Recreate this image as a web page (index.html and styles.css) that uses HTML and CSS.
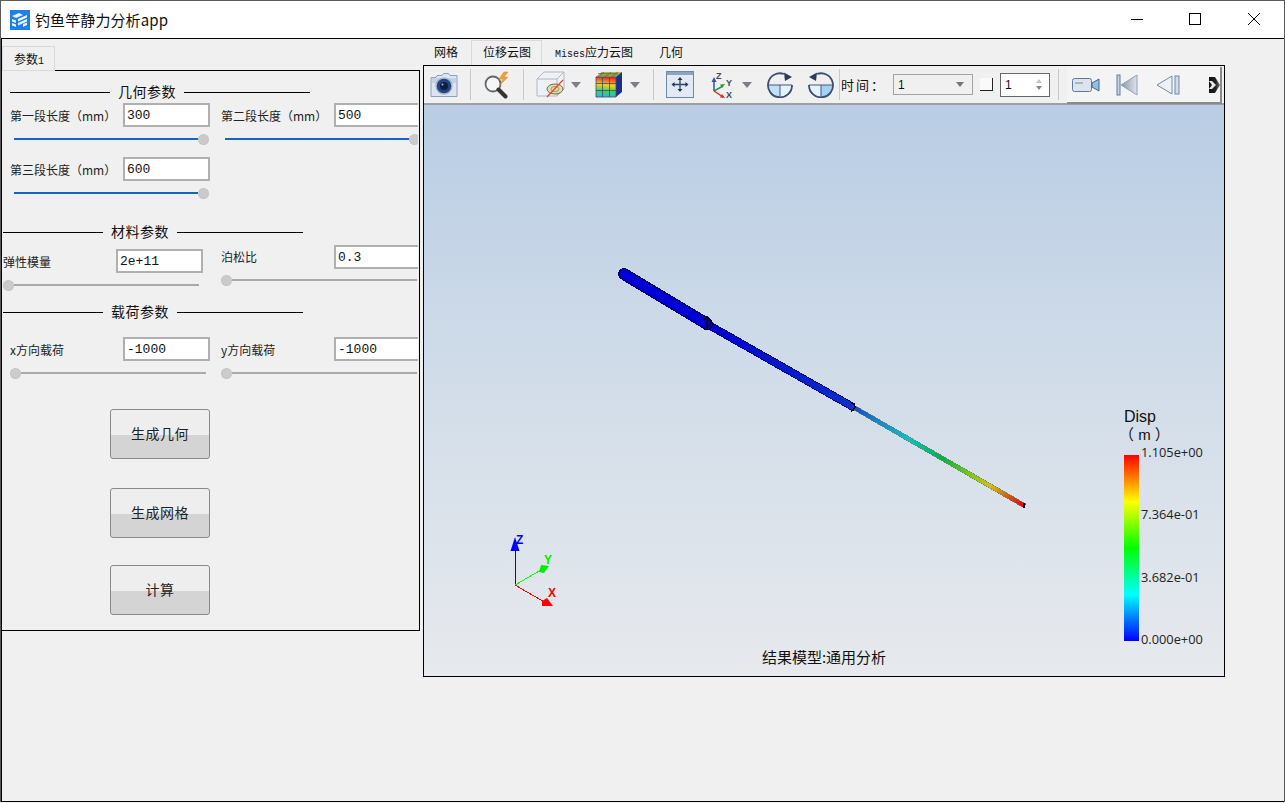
FILE: index.html
```html
<!DOCTYPE html>
<html lang="zh">
<head>
<meta charset="utf-8">
<title>钓鱼竿静力分析app</title>
<link rel="stylesheet" href="styles.css">
</head>
<body>
<div class="window">
  <header class="titlebar">
    <svg class="logo" width="20" height="20" viewBox="0 0 20 20"><rect width="20" height="20" fill="#1d80e8"/><path d="M2 6 9 3l4 2-7 3zM2 9l4 1.500V13L2 11.500zM2 13l4 1.500V17L2 15.500zM8 9l9-4v2.500L8 11.500zM8 13l9-4v2.500L8 15.500zM13 14l4-1.500V15l-4 2z" fill="#e8f3ff"/></svg>
    <span class="apptitle">钓鱼竿静力分析app</span>
    <div class="winctl">
      <svg width="14" height="14" viewBox="0 0 14 14"><path d="M0 6.500h12" stroke="#000" fill="none"/></svg>
      <svg width="14" height="14" viewBox="0 0 14 14"><rect x=".5" y=".5" width="11" height="11" stroke="#000" fill="none"/></svg>
      <svg width="14" height="14" viewBox="0 0 14 14"><path d="M1 0l12 12M13 0 1 12" stroke="#000" fill="none"/></svg>
    </div>
  </header>
  <main class="body">
    <section class="left">
      <div class="ltabs"><span class="ltab">参数<b class="mono">1</b></span></div>
      <div class="panel">
        <div class="clip">
          <div class="sec sec-a"><i></i><span>几何参数</span><i class="long"></i></div>
          <div class="row r1">
            <div class="col">
              <div class="field"><label>第一段长度（mm）</label><input value="300" readonly></div>
              <div class="slider full"><i class="fill"></i><i class="thumb"></i></div>
            </div>
            <div class="col">
              <div class="field"><label>第二段长度（mm）</label><input value="500" readonly></div>
              <div class="slider full"><i class="fill"></i><i class="thumb"></i></div>
            </div>
          </div>
          <div class="row r2">
            <div class="col">
              <div class="field"><label>第三段长度（mm）</label><input value="600" readonly></div>
              <div class="slider full"><i class="fill"></i><i class="thumb"></i></div>
            </div>
          </div>
          <div class="sec sec-b"><i></i><span>材料参数</span><i class="long"></i></div>
          <div class="row r3">
            <div class="col shifted">
              <div class="field"><label>弹性模量</label><input value="2e+11" readonly></div>
              <div class="slider"><i class="thumb"></i><i class="rest"></i></div>
            </div>
            <div class="col raised">
              <div class="field up"><label>泊松比</label><input value="0.3" readonly></div>
              <div class="slider"><i class="thumb"></i><i class="rest"></i></div>
            </div>
          </div>
          <div class="sec sec-c"><i></i><span>载荷参数</span><i class="long"></i></div>
          <div class="row r4">
            <div class="col">
              <div class="field"><label>x方向载荷</label><input value="-1000" readonly></div>
              <div class="slider"><i class="thumb"></i><i class="rest"></i></div>
            </div>
            <div class="col">
              <div class="field"><label>y方向载荷</label><input value="-1000" readonly></div>
              <div class="slider"><i class="thumb"></i><i class="rest"></i></div>
            </div>
          </div>
          <div class="btns">
            <button class="btn b1">生成几何</button>
            <button class="btn b2">生成网格</button>
            <button class="btn b3">计算</button>
          </div>
        </div>
      </div>
    </section>
    <section class="right">
      <nav class="rtabs">
        <span class="rtab t1">网格</span>
        <span class="rtab t2">位移云图</span>
        <span class="rtab t3"><b class="mono">Mises</b>应力云图</span>
        <span class="rtab t4">几何</span>
      </nav>
      <div class="viewer">
        <div class="toolbar">
          <svg class="m6" width="28" height="24" viewBox="0 0 28 24"><path d="M1 4.500h5l1-2h5l1.500-2h5l1.500 2h7v21H1z" fill="#dde5f0" stroke="#8aa0bd"/><path d="M2 5h24v5H2z" fill="#c3d2e6"/><circle cx="14" cy="13" r="8" fill="#25457c" stroke="#a5b8d2" stroke-width="1.500"/><circle cx="14" cy="13" r="4" fill="#0c1f44"/><circle cx="12.500" cy="11.500" r="1" fill="#9fc0ee"/></svg>
          <i class="sep m12"></i>
          <svg class="m12" width="29" height="28" viewBox="0 0 29 28"><circle cx="10" cy="13" r="7.500" fill="#f4f6f9" stroke="#666" stroke-width="1.800"/><path d="M15.500 18.500l7 7" stroke="#333" stroke-width="4" stroke-linecap="round"/><path d="M21 1l-5 7h4l-3 6 8-8h-4l4-5z" fill="#f0a030" stroke="#c98a30" stroke-width=".5"/></svg>
          <i class="sep m11"></i>
          <svg class="m12" width="29" height="27" viewBox="0 0 29 27"><path d="M1 8l7-7h20v17l-7 7H1z" fill="#eef1f5" stroke="#b0b8c4"/><path d="M1 8h20v17M21 8l7-7" fill="none" stroke="#b0b8c4"/><ellipse cx="19" cy="18" rx="8" ry="5" fill="#e6d9a8" stroke="#6b6a50"/><ellipse cx="19" cy="18" rx="4" ry="2.500" fill="none" stroke="#a89a68"/><path d="M11 26 27 9" stroke="#d84a30" stroke-width="1.200"/></svg>
          <svg class="m6 tri" width="10" height="6" viewBox="0 0 10 6"><path d="M0 0h10L5 6z" fill="#7b7f86"/></svg>
          <svg class="m14" width="28" height="27" viewBox="0 0 28 27"><defs><linearGradient id="gridg" x1="0.100" y1="0" x2="0" y2="1"><stop offset="0" stop-color="#f03020"/><stop offset=".35" stop-color="#f5d020"/><stop offset=".65" stop-color="#40d060"/><stop offset="1" stop-color="#30b0f0"/></linearGradient></defs><path d="M1 6l6-5h20v20l-6 5H1z" fill="#1c2f8c"/><path d="M1 6l6-5h20l-6 5z" fill="#b8b84a"/><path d="M3 6l6-5M10 6l6-5M16.500 6l6-5M5 4h20M3 2.500h20" stroke="#4a5a50" stroke-width=".6"/><rect x="1" y="6" width="20" height="20" fill="url(#gridg)"/><path d="M7.500 6v20M14.500 6v20M1 12.500h20M1 19.500h20" stroke="#3a4a70" stroke-width=".8"/><path d="M1 6h20v20H1z" fill="none" stroke="#3a4a70" stroke-width=".8"/></svg>
          <svg class="m7 tri" width="10" height="6" viewBox="0 0 10 6"><path d="M0 0h10L5 6z" fill="#7b7f86"/></svg>
          <i class="sep m13"></i>
          <svg class="m12" width="28" height="27" viewBox="0 0 28 27"><rect x=".5" y=".5" width="27" height="26" fill="#e3e9f2" stroke="#7187a8"/><path d="M1 1h26v3H1z" fill="#8ea3c1"/><path d="M14 8v11M8 13.500h12" stroke="#2e4468" stroke-width="1.300"/><path d="M14 6l-2.500 3h5zM14 21l-2.500-3h5zM5.500 13.500l3-2.500v5zM22.500 13.500l-3-2.500v5z" fill="#1f3558"/></svg>
          <svg class="m17" width="24" height="28" viewBox="0 0 24 28"><path d="M3 20V9" stroke="#2b55b5" stroke-width="1.500"/><path d="M3 6 .5 11h5z" fill="#2b55b5"/><path d="M3 20l9-5" stroke="#2d9a3a" stroke-width="1.500"/><path d="M14 13l-5 .5 2 3.500z" fill="#2d9a3a"/><path d="M3 20l9 6" stroke="#d8302a" stroke-width="1.500"/><path d="M14 27l-5-.5 2-3.500z" fill="#d8302a"/><text x="5" y="8" class="axl">Z</text><text x="15" y="15" class="axl">Y</text><text x="15" y="27" class="axl">X</text></svg>
          <svg class="m7 tri" width="10" height="6" viewBox="0 0 10 6"><path d="M0 0h10L5 6z" fill="#7b7f86"/></svg>
          <svg class="m15" width="26" height="26" viewBox="0 0 26 26"><path d="M13 13H1a12 12 0 0 0 12 12z" fill="#bfe0f6"/><path d="M13 13h12a12 12 0 0 1-12 12z" fill="#e6f2fb"/><path d="M1 13h24M13 13v12" stroke="#45597a"/><path d="M17 2A12 12 0 1 0 25 13" fill="none" stroke="#3b4f72" stroke-width="1.800"/><path d="M17 .5l8 4.500-7 4z" fill="#2a3c5c"/></svg>
          <svg class="m15" width="26" height="26" viewBox="0 0 26 26"><path d="M13 13h12a12 12 0 0 1-12 12z" fill="#a5d2f2"/><path d="M13 13H1a12 12 0 0 0 12 12z" fill="#e6f2fb"/><path d="M1 13h24M13 13v12" stroke="#45597a"/><path d="M9 2A12 12 0 1 1 1 13" fill="none" stroke="#3b4f72" stroke-width="1.800"/><path d="M9 .5 1 5l7 4z" fill="#2a3c5c"/></svg>
          <i class="sep m5"></i>
          <span class="tlabel">时间：</span>
          <div class="combo"><span>1</span><svg width="8" height="5" viewBox="0 0 8 5"><path d="M0 0h8L4 5z" fill="#777"/></svg></div>
          <i class="check"></i>
          <div class="spin"><span>1</span><svg width="6" height="11" viewBox="0 0 6 11"><path d="M3 0l3 4H0z" fill="#c4c4c4"/><path d="M3 11l3-4H0z" fill="#888"/></svg></div>
          <i class="sep m8"></i>
          <div class="subbar">
            <svg class="m5" width="28" height="16" viewBox="0 0 28 16"><rect x=".5" y="1.500" width="19" height="13" rx="2" fill="#dde3ec" stroke="#5e7aa0"/><rect x="3" y="5" width="8" height="2" fill="#aab4c2"/><path d="M20 6l7-4v12l-7-4z" fill="#8fc0e4" stroke="#44648e"/></svg>
            <svg class="m16" width="22" height="22" viewBox="0 0 22 22"><defs><linearGradient id="pg" x1="0" y1="0" x2="1" y2="0"><stop offset="0" stop-color="#8698ae"/><stop offset="1" stop-color="#dfe4ea"/></linearGradient></defs><path d="M21 1v20L5 11z" fill="url(#pg)" stroke="#8fa0b5"/><rect x="1" y="1" width="3" height="20" fill="#c9d3df" stroke="#5f7da3"/></svg>
            <svg class="m18" width="24" height="20" viewBox="0 0 24 20"><path d="M16 1v18L1 10z" fill="#eef1f5" stroke="#6e89ab"/><rect x="19" y="1" width="4" height="18" fill="#d4dbe4" stroke="#6e89ab"/></svg>
            <svg class="m29" width="13" height="18" viewBox="0 0 13 18"><defs><linearGradient id="endg" x1="0" y1="0" x2="1" y2="0"><stop offset="0" stop-color="#111"/><stop offset=".6" stop-color="#222"/><stop offset="1" stop-color="#777"/></linearGradient></defs><path d="M0 1h6l5 8-5 8H0z" fill="url(#endg)"/><path d="M0 5h3l4 4-4 4H0l3-4z" fill="#e8e8e8"/></svg>
          </div>
        </div>
        <div class="canvas">
          <svg class="scene" width="800" height="571" viewBox="424 105 800 571">
            <defs>
              <linearGradient id="rodg" gradientUnits="userSpaceOnUse" x1="853" y1="407" x2="1025" y2="506">
                <stop offset="0" stop-color="#1248c0"/>
                <stop offset=".13" stop-color="#1a80c4"/>
                <stop offset=".32" stop-color="#10c0c0"/>
                <stop offset=".52" stop-color="#08b040"/>
                <stop offset=".67" stop-color="#70cc10"/>
                <stop offset=".8" stop-color="#d0c010"/>
                <stop offset=".9" stop-color="#d06010"/>
                <stop offset="1" stop-color="#e00000"/>
              </linearGradient>
              <linearGradient id="midg" gradientUnits="userSpaceOnUse" x1="707" y1="324" x2="853" y2="407">
                <stop offset="0" stop-color="#0000d0"/>
                <stop offset="1" stop-color="#0c30c8"/>
              </linearGradient>
              <linearGradient id="legend" x1="0" y1="1" x2="0" y2="0">
                <stop offset="0" stop-color="#0000ff"/>
                <stop offset=".25" stop-color="#00ffff"/>
                <stop offset=".5" stop-color="#00ff00"/>
                <stop offset=".75" stop-color="#ffff00"/>
                <stop offset="1" stop-color="#ff0000"/>
              </linearGradient>
            </defs>
            <g shape-rendering="crispEdges" fill="none">
              <path d="M853 407 1025 506" stroke="#2a3a40" stroke-opacity=".6" stroke-width="5"/>
              <path d="M853 407 1025 506" stroke="url(#rodg)" stroke-width="4"/>
              <path d="M707 324 853 407" stroke="#00006a" stroke-width="8"/>
              <path d="M707 324 853 407" stroke="url(#midg)" stroke-width="6.500"/>
            </g>
            <g fill="none" stroke-linecap="round" shape-rendering="crispEdges">
              <path d="M624 274 707 324" stroke="#00005a" stroke-width="12"/>
              <path d="M624 274 707 324" stroke="#0000c8" stroke-width="10"/>
              <path d="M624 274 707 324" stroke="#0000e0" stroke-width="4"/>
            </g>
            <g fill="none" stroke="#0a0a20" stroke-width="1.500" shape-rendering="crispEdges">
              <path d="M704 320l3-3 2 2-2 3v5l-2 3M709 319l2 3-2 5"/>
              <path d="M851 403l3 1 1 3-2 3-2 1"/>
              <path d="M1024 503v5"/>
            </g>
            <g shape-rendering="crispEdges">
              <path d="M515 585V545" stroke="#0000ff"/>
              <path d="M515 585 541 570" stroke="#00ff00"/>
              <path d="M515 585 546 603" stroke="#ff0000"/>
            </g>
            <path d="M515 537l-4.500 14h9z" fill="#0000ff"/>
            <path d="M549 566l-8-1-2 7 5 1z" fill="#00ee00"/>
            <path d="M553 606l-6-8-5 3 0 5z" fill="#ff0000"/>
            <text class="axis ax-z" x="516" y="544">Z</text>
            <text class="axis ax-y" x="544" y="564">Y</text>
            <text class="axis ax-x" x="548" y="597">X</text>
            <rect x="1124" y="455" width="15" height="186" fill="url(#legend)"/>
          </svg>
          <div class="legend">
            <div class="ltitle">Disp</div>
            <div class="lunit">（ m ）</div>
            <div class="lvals"><span>1.105e+00</span><span>7.364e-01</span><span>3.682e-01</span><span>0.000e+00</span></div>
          </div>
          <div class="caption">结果模型:通用分析</div>
        </div>
      </div>
    </section>
  </main>
</div>
</body>
</html>
```
FILE: styles.css
```css
*{box-sizing:border-box}
html,body{margin:0;padding:0;background:#f0f0f0}
body{font-family:"Noto Sans CJK SC","Liberation Sans",sans-serif;color:#111;overflow:hidden}
.window{width:1285px;height:802px;border:1px solid #5a5a5a;border-bottom:0;display:flex;flex-direction:column;background:#f0f0f0}
.titlebar{height:38px;flex:none;background:#fff;border-bottom:1px solid #000;display:flex;align-items:center;padding-left:9px}
.logo{flex:none;margin-top:1px}
.apptitle{font-size:15px;line-height:20px;margin-left:5px;color:#111;letter-spacing:.1px;font-family:"Noto Sans CJK SC",sans-serif}
.winctl{margin-left:auto;display:flex;gap:44px;padding-right:23px;margin-top:1px}
.winctl svg{display:block}
.body{flex:1;display:flex;align-items:flex-start;border-left:1px solid #000;border-bottom:1px solid #000;min-height:0}
.left{width:418px;flex:none;padding-top:7px}
.ltabs{display:flex;height:24px}
.ltab{width:53px;height:25px;border:1px solid #d9d9d9;background:#f0f0f0;position:relative;z-index:1;font-size:12px;line-height:23px;padding-left:11px;white-space:nowrap}
.mono{font-family:"Liberation Mono",monospace;font-weight:400;font-size:10px}
.panel{border-top:1px solid #000;border-right:1px solid #000;border-bottom:1px solid #000;padding-left:1px;height:561px}
.clip{width:415px;overflow:hidden;height:559px}
.sec{display:flex;align-items:center;height:20px;width:300px;font-size:14px;line-height:20px;gap:8px;white-space:nowrap}
.sec i{display:block;height:1px;background:#000;width:100px;flex:none}
.sec .long{width:126px}
.sec span{flex:none;width:58px;letter-spacing:.5px;padding-bottom:2px}
.sec-a{margin:11px 0 0 7px}
.sec-b{margin:23px 0 0 0}
.sec-c{margin:11px 0 0 0}
.row{display:flex}
.r1{margin:1px 0 0 7px;gap:11px}
.r2{margin:12px 0 0 7px}
.r3{gap:18px;align-items:flex-start}
.r4{margin:15px 0 0 7px;gap:11px}
.col{width:200px;flex:none}
.shifted{padding-top:7px}
.raised{padding-top:3px}
.field{display:flex;align-items:center;height:24px}
.field label{width:113px;flex:none;font-size:12px;line-height:16px;color:#222;white-space:nowrap;padding-top:1px}
.field.up label{padding-top:0}
.field input{width:87px;height:24px;flex:none;border:2px solid #b0b0b0;background:#fff;font:13px/20px "Liberation Mono",monospace;padding:1px 2px 0;color:#111;outline:none;border-radius:0}
.slider{display:flex;align-items:center;height:12px;width:196px;margin-top:6px}
.raised .slider{margin-top:5px}
.slider.full{width:195px;margin-left:4px}
.slider .fill{flex:1;height:2px;background:#1565c0}
.slider .rest{flex:1;height:2px;background:#a9a9a9}
.slider .thumb{width:11px;height:11px;border-radius:50%;background:#cbcbcb;flex:none;border:1px dotted #bdbdbd}
.btns{display:flex;flex-direction:column;align-items:flex-start;padding-left:107px}
.btn{width:100px;height:50px;border:1px solid #8a8a8a;border-radius:3px;background:linear-gradient(#eeeeee 0,#eeeeee 52%,#d4d4d4 52%,#d4d4d4 100%);font:14px/20px "Noto Sans CJK SC",sans-serif;letter-spacing:.5px;color:#222;padding:0 0 2px}
.b1{margin-top:30px}
.b2{margin-top:29px}
.b3{margin-top:27px}
.right{width:802px;flex:none;margin-left:3px;padding-top:1px}
.rtabs{display:flex;height:25px;align-items:stretch}
.rtab{font-size:12px;line-height:24px;white-space:nowrap}
.t1{padding:0 12px 0 11px;width:48px}
.t2{width:71px;padding-left:11px;border:1px solid #d9d9d9;border-bottom:0;line-height:22px;background:#f0f0f0}
.t3{padding:0 12px 0 13px;width:104px}
.t4{padding-left:13px}
.viewer{height:612px;border:1px solid #000;display:flex;flex-direction:column}
.toolbar{height:39px;flex:none;display:flex;align-items:center;border-bottom:2px solid #a0a0a0;background:#f0f0f0}
.toolbar svg{display:block;flex:none}
.sep{display:block;width:1px;height:31px;background:#c8c8c8;flex:none}
.m5{margin-left:5px}.m6{margin-left:6px}.m7{margin-left:7px}.m8{margin-left:8px}.m11{margin-left:11px}.m12{margin-left:12px}.m13{margin-left:13px}.m14{margin-left:14px}.m15{margin-left:15px}.m16{margin-left:16px}.m17{margin-left:17px}.m18{margin-left:18px}.m29{margin-left:29px}
.axl{font:bold 9px "Liberation Sans",sans-serif;fill:#3b4a60}
.tlabel{width:52px;margin-left:1px;font-size:13px;letter-spacing:2px;white-space:nowrap;flex:none}
.combo{width:80px;height:21px;border:1px solid #a3a3a3;flex:none;display:flex;align-items:center;justify-content:space-between;padding:0 8px 0 4px;font:12px "Liberation Sans",sans-serif;background:#f0f0f0}
.check{display:block;width:13px;height:13px;margin-left:7px;flex:none;border-right:1px solid #222;border-bottom:1px solid #222;background:#fafafa}
.spin{width:50px;height:24px;margin-left:7px;flex:none;border:1px solid #666;display:flex;align-items:center;justify-content:space-between;padding:0 7px 0 4px;font:12px "Liberation Sans",sans-serif;background:#fff}
.subbar{width:155px;height:37px;margin-left:8px;flex:none;overflow:hidden;display:flex;align-items:center;background:#f4f4f4;border-right:2px solid #8a8a8a;border-bottom:2px solid #8a8a8a;align-self:flex-start;margin-top:1px}
.canvas{position:relative;flex:1;overflow:hidden;background:linear-gradient(#b9cde4 0,#d2dde9 50%,#e7e9ed 100%)}
.scene{position:absolute;left:0;top:0;display:block}
.axis{font:bold 12px "Liberation Sans",sans-serif}
.ax-z{fill:#0000ff}.ax-y{fill:#00ee00}.ax-x{fill:#ff0000}
.legend{position:absolute;left:700px;top:303px;width:90px;height:240px}
.ltitle{font:16px/17px "Liberation Sans",sans-serif;color:#111}
.lunit{font:15px/18px "Liberation Sans","Noto Sans CJK SC",sans-serif;margin-left:-5px;margin-top:1px;white-space:nowrap}
.lvals{position:absolute;left:17px;top:37px;height:201px;display:flex;flex-direction:column;justify-content:space-between;font:12.800px/14px "Open Sans","Liberation Sans",sans-serif;color:#222}
.caption{position:absolute;left:0;right:0;bottom:10px;text-align:center;font-size:15px;line-height:18px;color:#111}
```
